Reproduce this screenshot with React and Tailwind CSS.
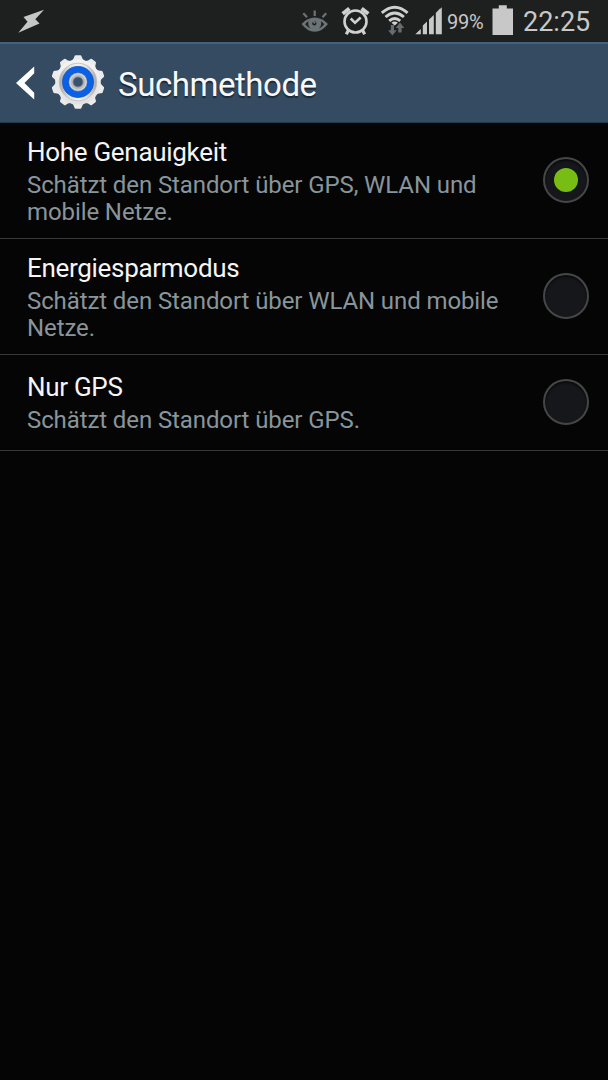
import { useState } from "react";

const METHODS = [
    {
        id: "high",
        title: "Hohe Genauigkeit",
        summary: "Schätzt den Standort über GPS, WLAN und mobile Netze.",
        rowClass: "h-[116px]",
    },
    {
        id: "saving",
        title: "Energiesparmodus",
        summary: "Schätzt den Standort über WLAN und mobile Netze.",
        rowClass: "h-[116px]",
    },
    {
        id: "gps",
        title: "Nur GPS",
        summary: "Schätzt den Standort über GPS.",
        rowClass: "h-24",
    },
];

const TEETH = [0, 36, 72, 108, 144, 180, 216, 252, 288, 324];

function GearIcon() {
    return (
        <svg className="mb-[2px] ml-[14px] h-14 w-14 shrink-0" viewBox="-28 -28 56 56">
            <defs>
                <linearGradient id="metal" x1="0" y1="0" x2="0" y2="1">
                    <stop offset="0" stopColor="#f4f4f4" />
                    <stop offset="1" stopColor="#e2e2e2" />
                </linearGradient>
                <linearGradient id="ring" x1="0" y1="0" x2="1" y2="0">
                    <stop offset="0" stopColor="#a8a8a8" />
                    <stop offset="0.3" stopColor="#e4e4e4" />
                    <stop offset="0.5" stopColor="#f2f2f2" />
                    <stop offset="0.7" stopColor="#e4e4e4" />
                    <stop offset="1" stopColor="#a8a8a8" />
                </linearGradient>
            </defs>
            {TEETH.map(angle => (
                <path
                    key={angle}
                    d="M-7 -21Q-4.2 -22.4 -3.6 -25.4Q-3.3 -26.7 -2.2 -26.7H2.2Q3.3 -26.7 3.6 -25.4Q4.2 -22.4 7 -21Z"
                    fill="#ebebeb"
                    transform={`rotate(${angle})`}
                />
            ))}
            <circle r="22.6" fill="url(#metal)" />
            <circle r="18.8" fill="url(#ring)" stroke="#bcbcbc" strokeWidth="0.8" />
            <circle r="15.7" fill="#0a60e6" stroke="#1850aa" strokeWidth="0.6" />
            <circle r="9.4" fill="#d2d5d9" stroke="#1850aa" strokeWidth="0.6" />
            <circle r="7.4" fill="#b9bcbf" />
            <circle r="5" fill="#37536f" stroke="#7b8187" strokeWidth="0.9" />
        </svg>
    );
}

function StatusBar() {
    return (
        <div className="flex h-[42px] bg-[#1e201f] text-[#c8c8c8]">
            <svg className="h-[42px] w-[440px] shrink-0" viewBox="0 0 440 42">
                {/* lightning bolt */}
                <path d="M44 9.8L23.5 17L27.5 21.8L18.3 32.7L39.5 23.4L35.3 19.2Z" fill="#c6c6c6" />
                {/* smart stay eye */}
                <path d="M301.5 24Q307.5 17.5 314.7 17.5Q322 17.5 328 24Q322 31.8 314.7 31.8Q307.5 31.8 301.5 24Z" fill="#6b7377" />
                <path d="M308.6 21.2Q306.6 22.4 305.2 24.2Q307.4 27 310.5 28.4Q307.2 25 308.6 21.2ZM320.8 21.2Q322.8 22.4 324.2 24.2Q322 27 318.9 28.4Q322.2 25 320.8 21.2Z" fill="#1e201f" />
                <circle cx="314.3" cy="23.4" r="2.1" fill="#1e201f" />
                <path d="M312.8 20.8L315 23.4" stroke="#6b7377" strokeWidth="1.8" />
                <path d="M314.7 10.5V16M303.3 13.2L307 17.2M326.2 13.2L322.5 17.2" fill="none" stroke="#6b7377" strokeWidth="2.2" />
                {/* alarm clock */}
                <g fill="none" stroke="#d0d0d0" strokeWidth="2.6">
                    <circle cx="355.5" cy="21.5" r="11" />
                    <path d="M350.7 18.5L355 22.8L360.7 17.5" />
                    <path d="M342.7 13.8L349.4 8.4M368.3 13.8L361.6 8.4" strokeWidth="3.8" />
                    <path d="M348.6 30L346.3 34.2M362.4 30L364.7 34.2" strokeWidth="3.2" />
                </g>
                {/* wifi */}
                <g fill="none" stroke="#d0d0d0" strokeWidth="2.9">
                    <path d="M381.8 12.9Q394.7 1.6 407.6 12.9" />
                    <path d="M385.5 17Q394.7 8.9 403.9 17" />
                    <path d="M389.2 20.8Q394.7 16 400.2 20.8" />
                </g>
                <path d="M391.5 22.8Q394.7 20.2 397.9 22.8L394.7 25.6Z" fill="#d0d0d0" />
                <path d="M390.8 25H394V30.2H396.7L392.4 35.6L388.1 30.2H390.8ZM398.3 32.5V28H395.7L400 22.6L404.3 28H401.6V32.5Z" fill="#666c6f" />
                {/* signal */}
                <path d="M415.3 34.3L420.8 29V34.3ZM422.8 34.3V25.5L427 21.5V34.3ZM429 34.3V19.5L433.8 15V34.3ZM435.8 34.3V13L440 8.5V34.3Z" fill="#c8c8c8" />
            </svg>
            <svg className="h-[42px] w-[7px] shrink-0" viewBox="0 0 7 42">
                <path d="M0 34.3V9L1.8 7.3V34.3Z" fill="#c8c8c8" />
            </svg>
            <span className="w-[45px] shrink-0 pt-[9px] text-[20px] leading-[26px] tracking-[-0.2px]">99%</span>
            <svg className="mt-[5px] h-[30px] w-[22px] shrink-0" viewBox="0 0 22 30">
                <path d="M0.5 3.5H6.8V0.2H14.8V3.5H21V30H0.5Z" fill="#c8c8c8" />
            </svg>
            <span className="ml-[9px] pt-[6px] text-[27px] leading-8">22:25</span>
        </div>
    );
}

function Radio({ checked }) {
    return (
        <span className="mb-[2px] flex h-[46px] w-[46px] shrink-0 items-center justify-center rounded-full border-2 border-[#464646] bg-[#15171b] shadow-[inset_0_2px_2px_#0a0b0d]">
            {checked && <span className="h-6 w-6 rounded-full bg-[#78bd13]" />}
        </span>
    );
}

function MethodRow({ method, checked, onSelect }) {
    return (
        <button
            type="button"
            role="radio"
            aria-checked={checked}
            onClick={onSelect}
            className={`${method.rowClass} flex w-full items-center justify-between border-b border-[#383838] pr-[19px] pl-[27px] text-left`}
        >
            <span className="w-[490px]">
                <span className="block text-[26px] leading-[34px] tracking-[-0.3px] text-[#f5f5f5]">{method.title}</span>
                <span className="block pt-[3px] text-[24px] leading-[27.5px] tracking-[-0.1px] text-[#88959b]">{method.summary}</span>
            </span>
            <Radio checked={checked} />
        </button>
    );
}

export default function App() {
    const [selected, setSelected] = useState("high");

    return (
        <div className="h-[1080px] w-[608px] overflow-hidden bg-[#050505] font-[Roboto,sans-serif]">
            <StatusBar />
            <header className="flex h-[81px] items-center border-t-2 border-b border-t-[#42617a] border-b-[#22384c] bg-[#344b61] pl-4">
                <svg className="h-9 w-5 shrink-0" viewBox="0 0 20 36">
                    <path d="M18.2 1.5V8.2L8.5 18L18.2 27.8V34.5L0 18Z" fill="#fff" />
                </svg>
                <GearIcon />
                <h1 className="mt-[3px] ml-[12px] text-[33px] leading-10 tracking-[-0.45px] text-[#f8f8f8] [text-shadow:0_2px_1px_#1b2a38]">Suchmethode</h1>
            </header>
            <div role="radiogroup" aria-label="Suchmethode">
                {METHODS.map(method => (
                    <MethodRow
                        key={method.id}
                        method={method}
                        checked={selected === method.id}
                        onSelect={() => setSelected(method.id)}
                    />
                ))}
            </div>
        </div>
    );
}
